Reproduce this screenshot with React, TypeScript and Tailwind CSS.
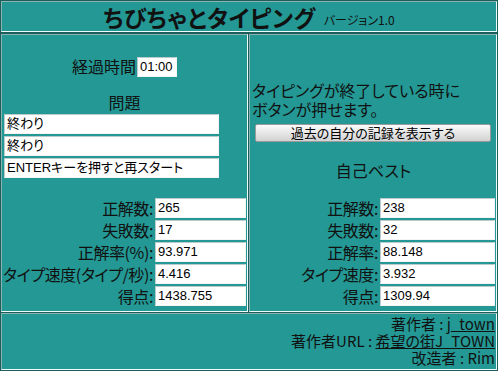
import React from 'react';

const JP = "font-['MS_PGothic','Noto_Sans_CJK_JP',sans-serif] [font-feature-settings:'palt']";
const FIELD = "h-[20px] bg-white border border-t-[#b9cccb] border-l-[#b9cccb] border-b-[#f4f4f4] border-r-[#f4f4f4] px-[2px] text-[13px] leading-[18px] text-black font-['Liberation_Sans','Noto_Sans_CJK_JP',sans-serif] overflow-hidden whitespace-nowrap";
const CELL = "bg-[#239894] border border-t-[#8db3b1] border-l-[#8db3b1] border-b-[#effcfb] border-r-[#effcfb]";

interface Stat {
    label: string;
    value: string;
}

const CURRENT: Stat[] = [
    { label: '正解数:', value: '265' },
    { label: '失敗数:', value: '17' },
    { label: '正解率(%):', value: '93.971' },
    { label: 'タイプ速度(タイプ/秒):', value: '4.416' },
    { label: '得点:', value: '1438.755' },
];

const BEST: Stat[] = [
    { label: '正解数:', value: '238' },
    { label: '失敗数:', value: '32' },
    { label: '正解率:', value: '88.148' },
    { label: 'タイプ速度:', value: '3.932' },
    { label: '得点:', value: '1309.94' },
];

function StatRows({ stats, fieldWidth }: { stats: Stat[]; fieldWidth: string }) {
    return (
        <div className="flex flex-col gap-[2px]">
            {stats.map(s => (
                <div key={s.label} className="flex items-center h-[20px]">
                    <span className="flex-1 min-w-0 text-right text-[16px] leading-[20px] whitespace-nowrap tracking-[-0.4px] pr-[2px]">{s.label}</span>
                    <div className={`${FIELD} ${fieldWidth} shrink-0`}>{s.value}</div>
                </div>
            ))}
        </div>
    );
}

export default function App() {
    return (
        <div className={`w-[498px] h-[371px] bg-[#1c5e5b] p-[1px] flex flex-col text-[#111] ${JP}`}>
            {/* Title */}
            <div className={`${CELL} h-[31px] flex items-center justify-center gap-[8px]`}>
                <span className="text-[23px] font-bold leading-[28px] tracking-[0.5px]">ちびちゃとタイピング</span>
                <span className="text-[12px] leading-[16px] mt-[6px]">バージョン1.0</span>
            </div>

            <div className="mt-[2px] h-[278px] flex gap-[1px]">
                {/* Current run */}
                <div className={`${CELL} w-[247px] flex flex-col px-[1px]`}>
                    <div className="mt-[22px] flex items-center justify-center h-[19px]">
                        <span className="text-[16px] leading-[19px]">経過時間</span>
                        <div className={`${FIELD} h-[19px] w-[40px] ml-[1px]`}>01:00</div>
                    </div>
                    <div className="mt-[16px] h-[20px] text-center text-[16px] leading-[20px]">問題</div>
                    <div className="mt-[2px] flex flex-col gap-[2px] ml-[1px]">
                        <div className={`${FIELD} w-[215px]`}>終わり</div>
                        <div className={`${FIELD} w-[215px]`}>終わり</div>
                        <div className={`${FIELD} w-[215px]`}>ENTERキーを押すと再スタート</div>
                    </div>
                    <div className="mt-[20px]">
                        <StatRows stats={CURRENT} fieldWidth="w-[91px]" />
                    </div>
                </div>

                {/* Personal best */}
                <div className={`${CELL} w-[248px] flex flex-col px-[1px]`}>
                    <div className="mt-[46px] pl-[1px] text-[16px] leading-[19px]">
                        タイピングが終了している時に<br />ボタンが押せます。
                    </div>
                    <button className="mt-[5px] mx-[4px] h-[18px] rounded-[2px] border border-[#9a9a9a] bg-gradient-to-b from-[#fbfbfb] to-[#d2d2d2] text-[13px] leading-[16px] text-black">
                        過去の自分の記録を表示する
                    </button>
                    <div className="mt-[18px] text-center text-[16px] leading-[20px] pl-[1px]">自己ベスト</div>
                    <div className="mt-[18px]">
                        <StatRows stats={BEST} fieldWidth="w-[115px]" />
                    </div>
                </div>
            </div>

            {/* Credits */}
            <div className={`${CELL} mt-[1px] h-[57px] flex flex-col items-end pr-[1px] pt-[1px] text-[15px] leading-[17px]`}>
                <div>著作者 : <span className="underline">j_town</span></div>
                <div>著作者URL : <span className="underline">希望の街J_TOWN</span></div>
                <div>改造者 : Rim</div>
            </div>
        </div>
    );
}
